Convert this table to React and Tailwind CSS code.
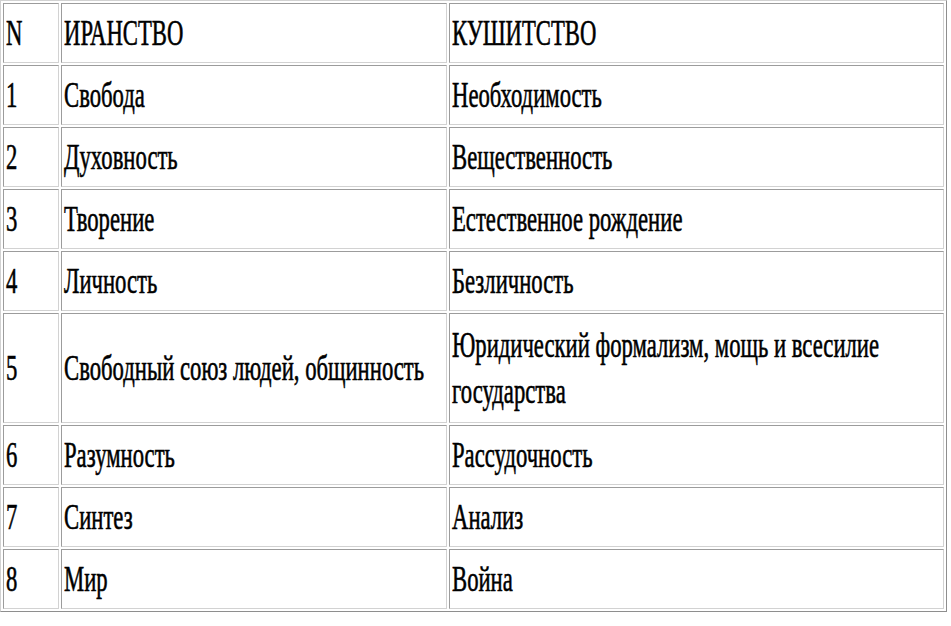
import React from 'react'

const rows = [
  { n: "N", a: "ИРАНСТВО", b: "КУШИТСТВО" },
  { n: "1", a: "Свобода", b: "Необходимость" },
  { n: "2", a: "Духовность", b: "Вещественность" },
  { n: "3", a: "Творение", b: "Естественное рождение" },
  { n: "4", a: "Личность", b: "Безличность" },
  { n: "5", a: "Свободный союз людей, общинность", b: "Юридический формализм, мощь и всесилие государства", tall: true },
  { n: "6", a: "Разумность", b: "Рассудочность" },
  { n: "7", a: "Синтез", b: "Анализ" },
  { n: "8", a: "Мир", b: "Война" },
];

const cell = "border-t border-l border-b border-r border-t-[#9c9c9c] border-l-[#9c9c9c] border-b-[#d2d2d2] border-r-[#d2d2d2] pl-[2px] align-middle overflow-visible";

function Txt({ children, wrap }) {
  if (wrap) {
    return (
      <span className="inline-block w-[785px] origin-left scale-x-[0.63] whitespace-normal">
        {children}
      </span>
    );
  }
  return (
    <span className="inline-block origin-left scale-x-[0.63] whitespace-nowrap">{children}</span>
  );
}

export default function App() {
  return (
    <div className="bg-white w-[951px] h-[626px] overflow-hidden text-black font-['Liberation_Serif',serif] text-[36px] leading-[46px] [-webkit-text-stroke:0.6px_black]">
      <table className="table-fixed w-[947px] border-separate border-spacing-[2px] border border-t-[#d2d2d2] border-l-[#d2d2d2] border-b-[#8e8e8e] border-r-[#8e8e8e]">
        <colgroup>
          <col className="w-[56px]" />
          <col className="w-[386px]" />
          <col className="w-[495px]" />
        </colgroup>
        <tbody>
          {rows.map((r) => (
            <tr key={r.n}>
              <td className={cell + (r.tall ? " h-[110px]" : " h-[60px]")}>
                <Txt>{r.n}</Txt>
              </td>
              <td className={cell}>
                <Txt>{r.a}</Txt>
              </td>
              <td className={cell}>
                <Txt wrap={r.tall}>{r.b}</Txt>
              </td>
            </tr>
          ))}
        </tbody>
      </table>
    </div>
  )
}
